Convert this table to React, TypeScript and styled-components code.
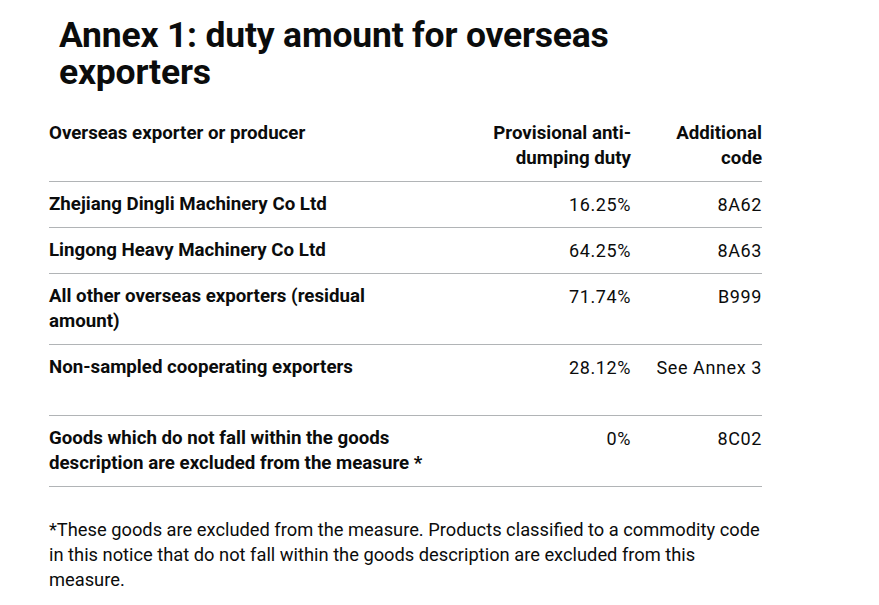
import styled, { createGlobalStyle } from "styled-components";

// Data
interface DutyRow {
  producer: string;
  duty: string;
  code: string;
  tall?: boolean;
}

const ROWS: DutyRow[] = [
  { producer: "Zhejiang Dingli Machinery Co Ltd", duty: "16.25%", code: "8A62" },
  { producer: "Lingong Heavy Machinery Co Ltd", duty: "64.25%", code: "8A63" },
  { producer: "All other overseas exporters (residual amount)", duty: "71.74%", code: "B999" },
  { producer: "Non-sampled cooperating exporters", duty: "28.12%", code: "See Annex 3", tall: true },
  {
    producer: "Goods which do not fall within the goods description are excluded from the measure *",
    duty: "0%",
    code: "8C02",
  },
];

export default function App() {
  return (
    <>
      <GlobalStyle />
      <Page>
        <Heading>Annex 1: duty amount for overseas exporters</Heading>
        <Table>
          <colgroup>
            <col style={{ width: 405 }} />
            <col style={{ width: 197 }} />
            <col style={{ width: 111 }} />
          </colgroup>
          <thead>
            <tr>
              <HeaderCell>Overseas exporter or producer</HeaderCell>
              <HeaderCell $numeric>Provisional anti-dumping duty</HeaderCell>
              <HeaderCell $numeric>Additional code</HeaderCell>
            </tr>
          </thead>
          <tbody>
            {ROWS.map((row) => (
              <tr key={row.code}>
                <RowHeader $tall={row.tall}>{row.producer}</RowHeader>
                <Cell>{row.duty}</Cell>
                <Cell>{row.code}</Cell>
              </tr>
            ))}
          </tbody>
        </Table>
        <Footnote>
          *These goods are excluded from the measure. Products classified to a commodity code in this notice that do not
          fall within the goods description are excluded from this measure.
        </Footnote>
      </Page>
    </>
  );
}

const GlobalStyle = createGlobalStyle`
  html, body {
    margin: 0;
    background: #ffffff;
  }

  body {
    font-family: Roboto, "Liberation Sans", sans-serif;
    color: #0b0c0c;
  }
`;

const Page = styled.main`
  width: 879px;
  padding: 17px 0 0 49px;
  box-sizing: border-box;
`;

const Heading = styled.h1`
  margin: 0 0 20px 10px;
  width: 600px;
  font-size: 35.5px;
  line-height: 37px;
  font-weight: 700;
  letter-spacing: -0.2px;
`;

const Table = styled.table`
  width: 713px;
  table-layout: fixed;
  border-collapse: collapse;
  border-spacing: 0;
  line-height: 25px;
`;

const HeaderCell = styled.th<{ $numeric?: boolean }>`
  padding: 10px 20px 10px 0;
  font-size: 18.7px;
  font-weight: 700;
  text-align: ${(p) => (p.$numeric ? "right" : "left")};
  vertical-align: top;
  border-bottom: 1px solid #b1b4b6;

  &:last-child {
    padding-right: 0;
  }
`;

const RowHeader = styled.th<{ $tall?: boolean }>`
  height: ${(p) => (p.$tall ? "50px" : "25px")};
  padding: 10px 20px 10px 0;
  font-size: 18.7px;
  font-weight: 700;
  text-align: left;
  vertical-align: top;
  border-bottom: 1px solid #b1b4b6;
`;

const Cell = styled.td`
  padding: 10px 20px 10px 0;
  font-size: 18px;
  letter-spacing: 0.6px;
  text-align: right;
  vertical-align: top;
  border-bottom: 1px solid #b1b4b6;

  &:last-child {
    padding-right: 0;
  }
`;

const Footnote = styled.p`
  margin: 30px 0 0;
  width: 712px;
  font-size: 18.3px;
  line-height: 25px;
`;
